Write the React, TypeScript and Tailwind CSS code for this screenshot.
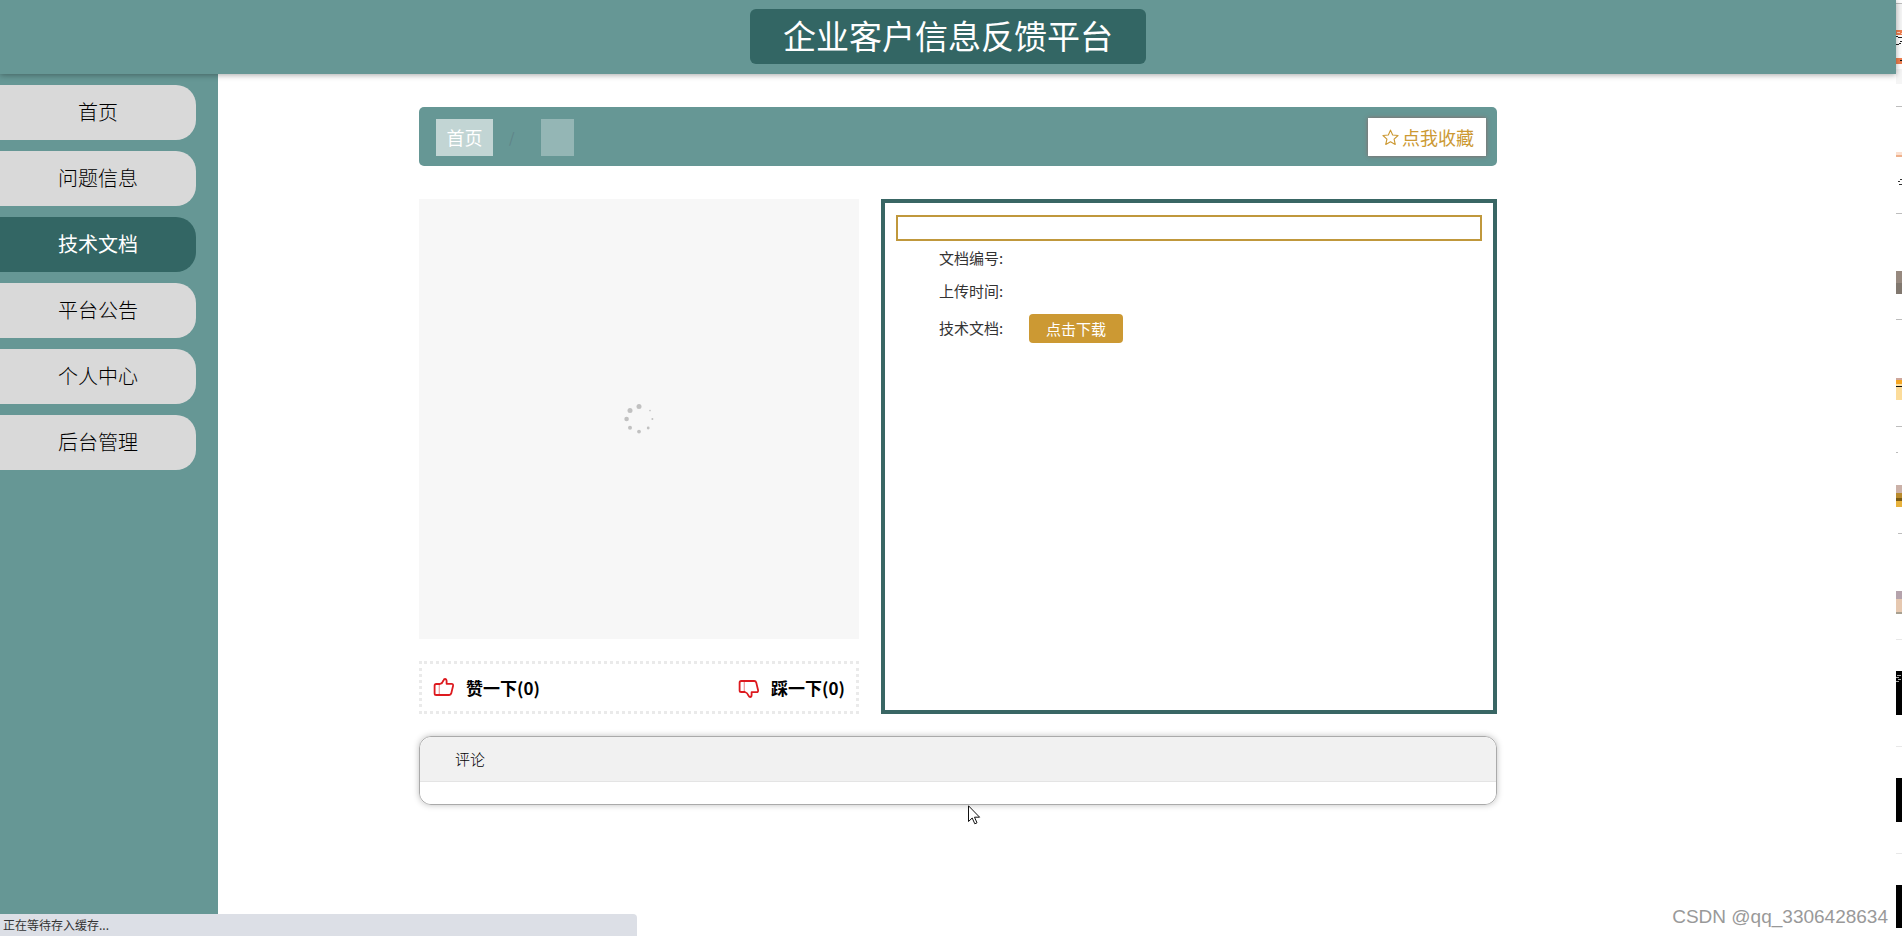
import React, { useState } from 'react';

interface NavItem {
  key: string;
  label: string;
}

const navItems: NavItem[] = [
  { key: 'home', label: '首页' },
  { key: 'issues', label: '问题信息' },
  { key: 'docs', label: '技术文档' },
  { key: 'notice', label: '平台公告' },
  { key: 'profile', label: '个人中心' },
  { key: 'admin', label: '后台管理' },
];

const StarIcon = () => (
  <svg className="h-[17px] w-[17px]" viewBox="0 0 18 18" fill="none" stroke="currentColor" strokeWidth="1.2" strokeLinejoin="round">
    <path d="M9 1.2 11.3 6.3 17 6.9 12.8 10.7 14 16.4 9 13.5 4 16.4 5.2 10.7 1 6.9 6.7 6.3Z" />
  </svg>
);

const ThumbUp = () => (
  <svg className="h-[20px] w-[22px]" viewBox="0 0 22 20" fill="none" stroke="#dd1a1f" strokeWidth="1.8" strokeLinejoin="round">
    <path d="M7 6H3.2Q1.6 6 1.6 7.6V15.4Q1.6 17 3.2 17H16.2Q17.8 17 18.2 15.6L20.1 7.8Q20.3 5.8 18.6 5.8H13.6V3Q13.6 1 12 1Q10.9 1 10.5 2.4Q9.4 5.4 7 6Z" />
    <path d="M6.3 6.4V16.8" strokeWidth="1.2" opacity="0.45" />
  </svg>
);

const ThumbDown = () => (
  <svg className="h-[20px] w-[22px]" viewBox="0 0 22 20" fill="none" stroke="#dd1a1f" strokeWidth="1.8" strokeLinejoin="round">
    <path d="M7 14H3.2Q1.6 14 1.6 12.4V4.6Q1.6 3 3.2 3H16.2Q17.8 3 18.2 4.4L20.1 12.2Q20.3 14.2 18.6 14.2H13.6V17Q13.6 19 12 19Q10.9 19 10.5 17.6Q9.4 14.6 7 14Z" />
    <path d="M6.3 3.2V13.6" strokeWidth="1.2" opacity="0.45" />
  </svg>
);

const Spinner = () => (
  <svg className="h-[30px] w-[30px]" viewBox="0 0 30 30" fill="#c1c1c1">
    <circle cx="15" cy="2.6" r="2.5" />
    <circle cx="6" cy="6.4" r="2.5" />
    <circle cx="2.6" cy="15" r="2.3" />
    <circle cx="6" cy="23.8" r="2" />
    <circle cx="15" cy="27.6" r="1.9" />
    <circle cx="24.2" cy="24" r="1.4" />
    <circle cx="28.4" cy="15" r="1" />
    <circle cx="26" cy="6.6" r="0.8" />
  </svg>
);

// 右侧窗口露出的边缘
const WindowEdge = () => (
  <svg className="block h-[936px] w-1.5 shrink-0" viewBox="0 0 6 936" shapeRendering="crispEdges">
    <rect y="4" width="6" height="80" fill="#f5f5f5" />
    <rect y="35" width="6" height="23" fill="#fff" />
    <rect y="30" width="6" height="5" fill="#ef7f50" />
    <path d="M1 32h3M5 33h1" stroke="#fbd9c8" />
    <path d="M0 36.5h2M2 37.5h4M4 41.5h2M3 43.5h2M0 44.5h3" stroke="#222" />
    <rect y="58" width="6" height="6" fill="#ef7f50" />
    <rect x="4" y="60" width="2" height="1" fill="#111" />
    <rect y="64" width="6" height="5" fill="#fff" />
    <path d="M0 3.5h6M0 106.5h6M0 213.5h6M0 319.5h6M0 426.5h6M2 533.5h4" stroke="#bdbdbd" />
    <rect y="152" width="6" height="3" fill="#fbe0d0" />
    <rect y="155" width="6" height="2" fill="#efb18c" />
    <path d="M4 179.5h2M2 181.5h2M3 184.5h3" stroke="#333" />
    <rect y="271" width="6" height="12" fill="#97897f" />
    <rect y="283" width="6" height="11" fill="#81786f" />
    <rect y="378" width="6" height="2" fill="#cfa79b" />
    <rect y="380" width="6" height="4" fill="#f5a623" />
    <rect y="384" width="6" height="2" fill="#fde0a0" />
    <rect y="386" width="6" height="1" fill="#111" />
    <rect y="387" width="6" height="13" fill="#fcdc9a" />
    <path d="M0 452.5h2" stroke="#bbb" />
    <rect y="485" width="6" height="8" fill="#cbb1a8" />
    <rect y="493" width="6" height="5" fill="#b98a2c" />
    <rect y="498" width="6" height="3" fill="#7a5a14" />
    <rect y="501" width="6" height="6" fill="#e8b23c" />
    <rect y="591" width="6" height="8" fill="#b5a3ac" />
    <rect y="599" width="6" height="13" fill="#e6c8b0" />
    <rect y="612" width="6" height="2" fill="#a8a090" />
    <path d="M0 639.5h6M0 746.5h6M0 853.5h6" stroke="#e8e8e8" />
    <rect y="671" width="6" height="44" fill="#000" />
    <path d="M1 675.5h4M0 677.5h3M2 679.5h3M0 681.5h3" stroke="#aaa" />
    <rect y="778" width="6" height="44" fill="#000" />
    <rect y="885" width="6" height="43" fill="#000" />
  </svg>
);

const Cursor = () => (
  <svg className="pointer-events-none absolute top-full left-[548px] mt-px h-5 w-[13px]" viewBox="0 0 13 20" fill="#fff" stroke="#111" strokeWidth="1">
    <path d="M0.5 0.8V16.5L4.2 13 6.8 18.8 9 17.8 6.5 12.2H11.6Z" />
  </svg>
);

const App: React.FC = () => {
  const [active, setActive] = useState('docs');
  const [likes, setLikes] = useState(0);
  const [dislikes, setDislikes] = useState(0);

  return (
    <div className="relative flex min-h-screen overflow-hidden bg-white font-['Noto_Sans_CJK_SC',sans-serif] text-black">
      <div className="flex min-w-0 flex-1 flex-col">
        <header className="relative z-10 flex h-[74px] justify-center bg-[#669795] pt-[9px] shadow-[0_1px_6px_rgba(0,0,0,0.35)]">
          <h1 className="h-[55px] rounded-md bg-[#336664] px-[33px] text-[33px] leading-[52px] text-white">企业客户信息反馈平台</h1>
        </header>

        <div className="flex flex-1">
          <nav className="flex w-[218px] shrink-0 flex-col gap-[11px] bg-[#669795] pt-[11px] pr-[22px]">
            {navItems.map(item => (
              <a
                key={item.key}
                href={`#${item.key}`}
                onClick={() => setActive(item.key)}
                className={`block h-[55px] rounded-r-[20px] text-center text-xl leading-[54px] ${
                  active === item.key ? 'bg-[#336664] text-white' : 'bg-[#d9d9d9] font-light'
                }`}
              >
                {item.label}
              </a>
            ))}
          </nav>

          <main className="min-w-0 flex-1 pt-[33px] pr-[399px] pl-[201px]">
            <div className="flex h-[59px] items-center rounded-[5px] bg-[#669795] pt-px pr-[11px] pl-[17px] text-lg">
              <a href="#home" className="h-[37px] w-[57px] bg-white/60 text-center leading-[36px] text-white">首页</a>
              <span className="w-12 pl-4 text-sm text-[#5f8388]">/</span>
              <span className="h-[37px] w-[33px] bg-white/30" />
              <button className="ml-auto flex h-[38px] items-center gap-[3px] bg-white pr-3 pl-[14px] leading-[36px] text-[#cc9933] shadow-[0_0_4px_rgba(160,80,80,0.7)]">
                <StarIcon />
                点我收藏
              </button>
            </div>

            <div className="mt-[33px] flex gap-[22px]">
              <section className="w-[440px] shrink-0">
                <div className="flex h-[440px] items-center justify-center bg-[#f7f7f7]">
                  <Spinner />
                </div>
                <div className="mt-[22px] flex h-[53px] items-center justify-between border-[3px] border-dotted border-[#eaeaea] px-[11px] text-[17px] font-bold">
                  <button className="flex items-center gap-[11px]" onClick={() => setLikes(likes + 1)}>
                    <ThumbUp />
                    <span>赞一下({likes})</span>
                  </button>
                  <button className="flex items-center gap-[11px]" onClick={() => setDislikes(dislikes + 1)}>
                    <ThumbDown />
                    <span>踩一下({dislikes})</span>
                  </button>
                </div>
              </section>

              <section className="min-w-0 flex-1 border-4 border-[#396664] px-[11px] pt-3 text-[15px] text-[#333]">
                <div className="h-[26px] border-2 border-[#c0983c]" />
                <dl className="flex flex-col pt-px pl-[43px]">
                  <div className="flex h-[33px] items-center">
                    <dt>文档编号:</dt>
                  </div>
                  <div className="flex h-[33px] items-center">
                    <dt>上传时间:</dt>
                  </div>
                  <div className="flex h-10 items-center">
                    <dt className="w-[90px]">技术文档:</dt>
                    <dd>
                      <button className="block h-[29px] rounded bg-[#cc9933] px-[17px] leading-[27px] text-white">点击下载</button>
                    </dd>
                  </div>
                </dl>
              </section>
            </div>

            <section className="relative mt-[22px] rounded-xl border border-[#aaa] shadow-[0_0_6px_rgba(0,0,0,0.25)]">
              <h2 className="h-[45px] rounded-t-xl border-b border-[#e4e4e4] bg-[#f1f1f1] px-[35px] text-[15px] leading-[43px] font-light">评论</h2>
              <div className="h-[22px] rounded-b-xl bg-white" />
              <Cursor />
            </section>
          </main>
        </div>
      </div>

      <WindowEdge />

      <div className="absolute bottom-0 left-0 h-[22px] w-[637px] rounded-tr bg-[#dcdfe6] pl-[3px] text-xs leading-[22px] text-[#333]">
        正在等待存入缓存...
      </div>
      <div className="absolute right-[14px] bottom-[6px] font-['Liberation_Sans',sans-serif] text-[19px] leading-[26px] text-[#999]">
        CSDN @qq_3306428634
      </div>
    </div>
  );
};

export default App;
